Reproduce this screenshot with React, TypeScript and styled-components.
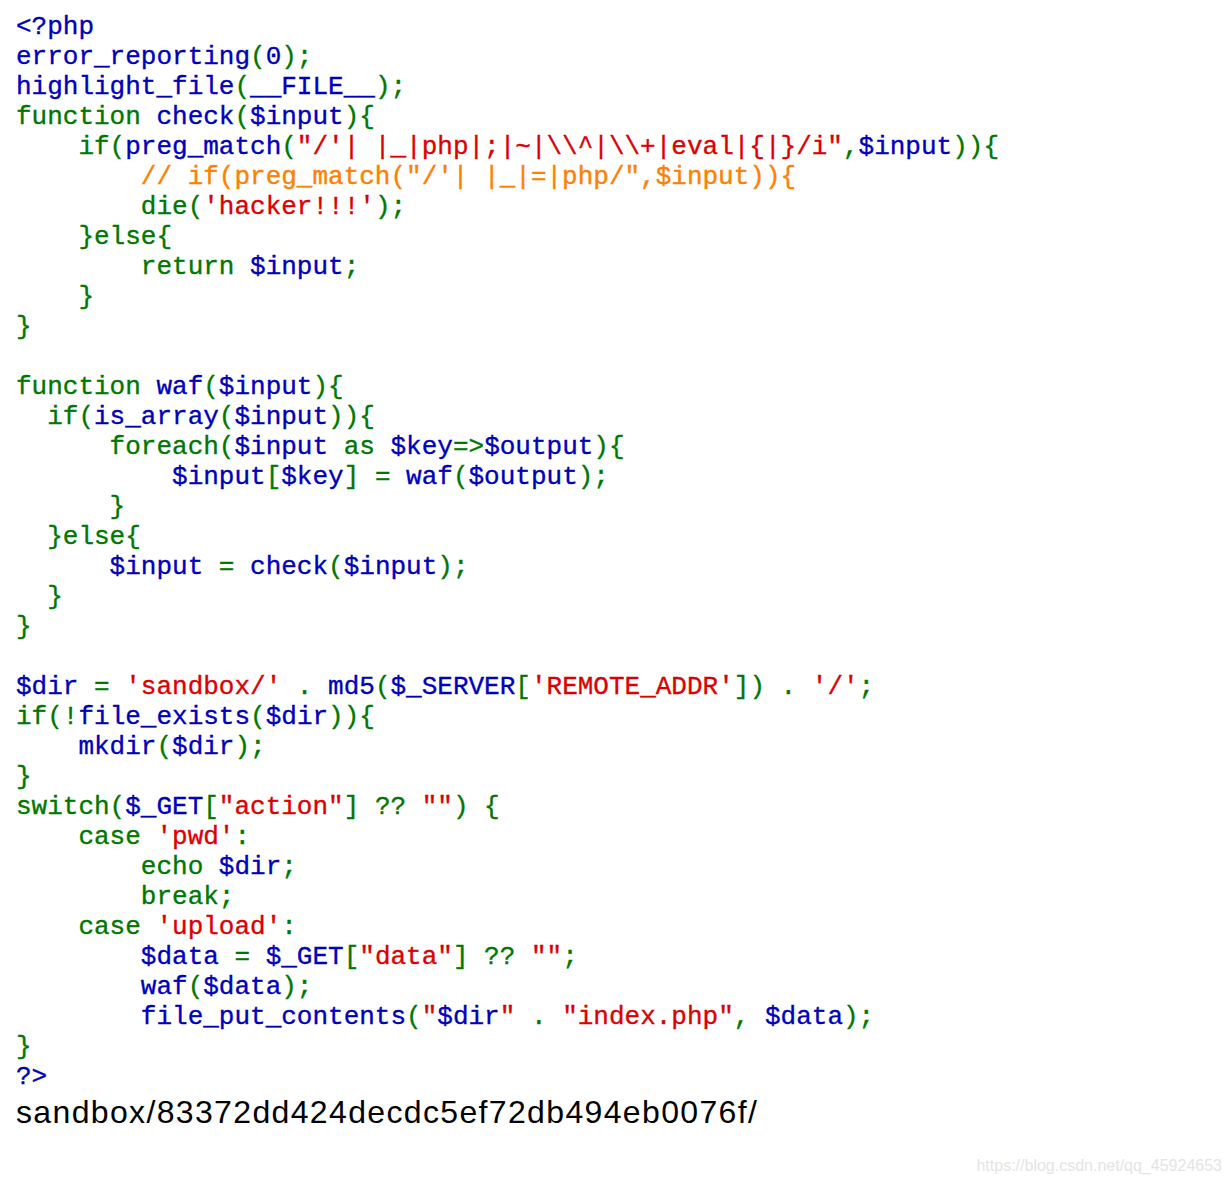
import React from "react";
import styled, { createGlobalStyle } from "styled-components";

const Global = createGlobalStyle`
  html, body { margin: 0; padding: 0; background: #ffffff; }
  body { width: 1232px; height: 1184px; overflow: hidden; position: relative; }
`;

type Kind = "d" | "k" | "s" | "c";

const colors: Record<Kind, string> = {
  d: "#0000BB",
  k: "#007700",
  s: "#DD0000",
  c: "#FF8000",
};

const Page = styled.div`
  padding: 12px 0 0 16px;
`;

const Code = styled.code`
  display: block;
  font-family: "Liberation Mono", "DejaVu Sans Mono", monospace;
  font-size: 26px;
  line-height: 30px;
  white-space: pre;
  color: #000000;
  -webkit-text-stroke: 0.35px currentColor;
`;

const Line = styled.div`
  height: 30px;
`;

const Token = styled.span<{ $kind: Kind }>`
  color: ${(p) => colors[p.$kind]};
`;

const Output = styled.div`
  margin-top: 2px;
  font-family: "Liberation Sans", Arial, sans-serif;
  font-size: 32px;
  letter-spacing: 1.35px;
  color: #000000;
`;

const Watermark = styled.div`
  position: absolute;
  right: 10px;
  bottom: 9px;
  font-family: "Liberation Sans", Arial, sans-serif;
  font-size: 16px;
  color: #e4e4e4;
`;

type Tok = [Kind, string];

const lines: Tok[][] = [
  [["d", "<?php"]],
  [["d", "error_reporting"], ["k", "("], ["d", "0"], ["k", ");"]],
  [["d", "highlight_file"], ["k", "("], ["d", "__FILE__"], ["k", ");"]],
  [["k", "function "], ["d", "check"], ["k", "("], ["d", "$input"], ["k", "){"]],
  [
    ["k", "    if("],
    ["d", "preg_match"],
    ["k", "("],
    ["s", "\"/'| |_|php|;|~|\\\\^|\\\\+|eval|{|}/i\""],
    ["k", ","],
    ["d", "$input"],
    ["k", ")){"],
  ],
  [["c", "        // if(preg_match(\"/'| |_|=|php/\",$input)){"]],
  [["k", "        die("], ["s", "'hacker!!!'"], ["k", ");"]],
  [["k", "    }else{"]],
  [["k", "        return "], ["d", "$input"], ["k", ";"]],
  [["k", "    }"]],
  [["k", "}"]],
  [],
  [["k", "function "], ["d", "waf"], ["k", "("], ["d", "$input"], ["k", "){"]],
  [["k", "  if("], ["d", "is_array"], ["k", "("], ["d", "$input"], ["k", ")){"]],
  [
    ["k", "      foreach("],
    ["d", "$input"],
    ["k", " as "],
    ["d", "$key"],
    ["k", "=>"],
    ["d", "$output"],
    ["k", "){"],
  ],
  [
    ["d", "          $input"],
    ["k", "["],
    ["d", "$key"],
    ["k", "] = "],
    ["d", "waf"],
    ["k", "("],
    ["d", "$output"],
    ["k", ");"],
  ],
  [["k", "      }"]],
  [["k", "  }else{"]],
  [["d", "      $input"], ["k", " = "], ["d", "check"], ["k", "("], ["d", "$input"], ["k", ");"]],
  [["k", "  }"]],
  [["k", "}"]],
  [],
  [
    ["d", "$dir"],
    ["k", " = "],
    ["s", "'sandbox/'"],
    ["k", " . "],
    ["d", "md5"],
    ["k", "("],
    ["d", "$_SERVER"],
    ["k", "["],
    ["s", "'REMOTE_ADDR'"],
    ["k", "]) . "],
    ["s", "'/'"],
    ["k", ";"],
  ],
  [["k", "if(!"], ["d", "file_exists"], ["k", "("], ["d", "$dir"], ["k", ")){"]],
  [["d", "    mkdir"], ["k", "("], ["d", "$dir"], ["k", ");"]],
  [["k", "}"]],
  [["k", "switch("], ["d", "$_GET"], ["k", "["], ["s", "\"action\""], ["k", "] ?? "], ["s", "\"\""], ["k", ") {"]],
  [["k", "    case "], ["s", "'pwd'"], ["k", ":"]],
  [["k", "        echo "], ["d", "$dir"], ["k", ";"]],
  [["k", "        break;"]],
  [["k", "    case "], ["s", "'upload'"], ["k", ":"]],
  [["d", "        $data"], ["k", " = "], ["d", "$_GET"], ["k", "["], ["s", "\"data\""], ["k", "] ?? "], ["s", "\"\""], ["k", ";"]],
  [["d", "        waf"], ["k", "("], ["d", "$data"], ["k", ");"]],
  [
    ["d", "        file_put_contents"],
    ["k", "("],
    ["s", "\""],
    ["d", "$dir"],
    ["s", "\""],
    ["k", " . "],
    ["s", "\"index.php\""],
    ["k", ", "],
    ["d", "$data"],
    ["k", ");"],
  ],
  [["k", "}"]],
  [["d", "?>"]],
];

export default function App() {
  return (
    <>
      <Global />
      <Page>
        <Code>
          {lines.map((toks, i) => (
            <Line key={i}>
              {toks.map(([kind, text], j) => (
                <Token key={j} $kind={kind}>
                  {text}
                </Token>
              ))}
            </Line>
          ))}
        </Code>
        <Output>sandbox/83372dd424decdc5ef72db494eb0076f/</Output>
      </Page>
      <Watermark>https://blog.csdn.net/qq_45924653</Watermark>
    </>
  );
}
